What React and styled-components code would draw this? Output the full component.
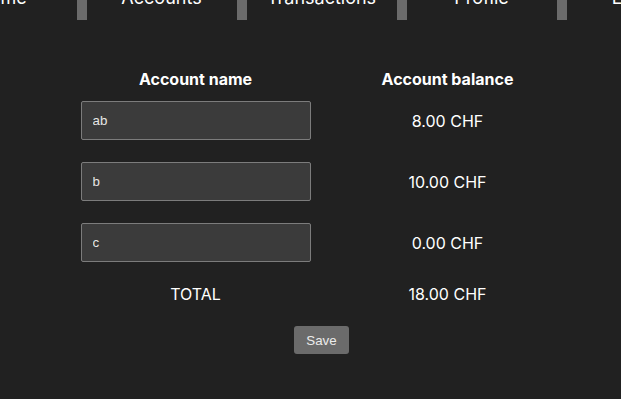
import React from "react";
import styled, { createGlobalStyle } from "styled-components";

const Global = createGlobalStyle`
  html, body { margin: 0; padding: 0; background: #212121; overflow: hidden; }
  body { font-family: Inter, "Noto Sans", sans-serif; color: #ffffff; }
`;

const Page = styled.div`
  width: 643px;
  display: flex;
  flex-direction: column;
  align-items: center;
`;

const Nav = styled.nav`
  display: flex;
  justify-content: center;
  height: 20px;
  width: 644px;
`;

const NavItem = styled.a`
  flex: 0 0 150px;
  display: flex;
  align-items: flex-end;
  justify-content: center;
  font-size: 18px;
  line-height: 20px;
  color: #ffffff;
  text-decoration: none;
  height: 20px;
  margin-top: -12px;
`;

const Sep = styled.span`
  flex: 0 0 10px;
  height: 20px;
  background: #6b6b6b;
`;

const Table = styled.div`
  margin-top: 48px;
  display: grid;
  grid-template-columns: 252px 252px;
  grid-template-rows: 22px 61px 61px 61px 42px;
  align-items: center;
  justify-items: center;
`;

const Head = styled.div`
  font-weight: 700;
  font-size: 16px;
  line-height: 22px;
`;

const Value = styled.div`
  font-size: 16px;
  line-height: 22px;
`;

const NameInput = styled.input`
  box-sizing: border-box;
  width: 230px;
  height: 39px;
  background: #3b3b3b;
  border: 1px solid #7c7c7c;
  border-radius: 2px;
  color: #e6e6e6;
  font-family: "Liberation Sans", Arial, sans-serif;
  font-size: 13.33px;
  padding: 0 11px;
  outline: none;
`;

const SaveButton = styled.button`
  margin-top: 11px;
  width: 55px;
  height: 28px;
  background: #6b6b6b;
  border: none;
  border-radius: 3px;
  color: #ececec;
  font-family: "Liberation Sans", Arial, sans-serif;
  font-size: 13.33px;
  padding: 0;
`;

const accounts = [
  { name: "ab", balance: "8.00 CHF" },
  { name: "b", balance: "10.00 CHF" },
  { name: "c", balance: "0.00 CHF" },
];

export default function App() {
  const links = ["Home", "Accounts", "Transactions", "Profile", "Logout"];
  return (
    <Page>
      <Global />
      <Nav>
        {links.map((l, i) => (
          <React.Fragment key={l}>
            {i > 0 && <Sep />}
            <NavItem href="#">{l}</NavItem>
          </React.Fragment>
        ))}
      </Nav>
      <Table>
        <Head>Account name</Head>
        <Head>Account balance</Head>
        {accounts.map((a) => (
          <React.Fragment key={a.name}>
            <NameInput defaultValue={a.name} />
            <Value>{a.balance}</Value>
          </React.Fragment>
        ))}
        <Value>TOTAL</Value>
        <Value>18.00 CHF</Value>
      </Table>
      <SaveButton>Save</SaveButton>
    </Page>
  );
}
